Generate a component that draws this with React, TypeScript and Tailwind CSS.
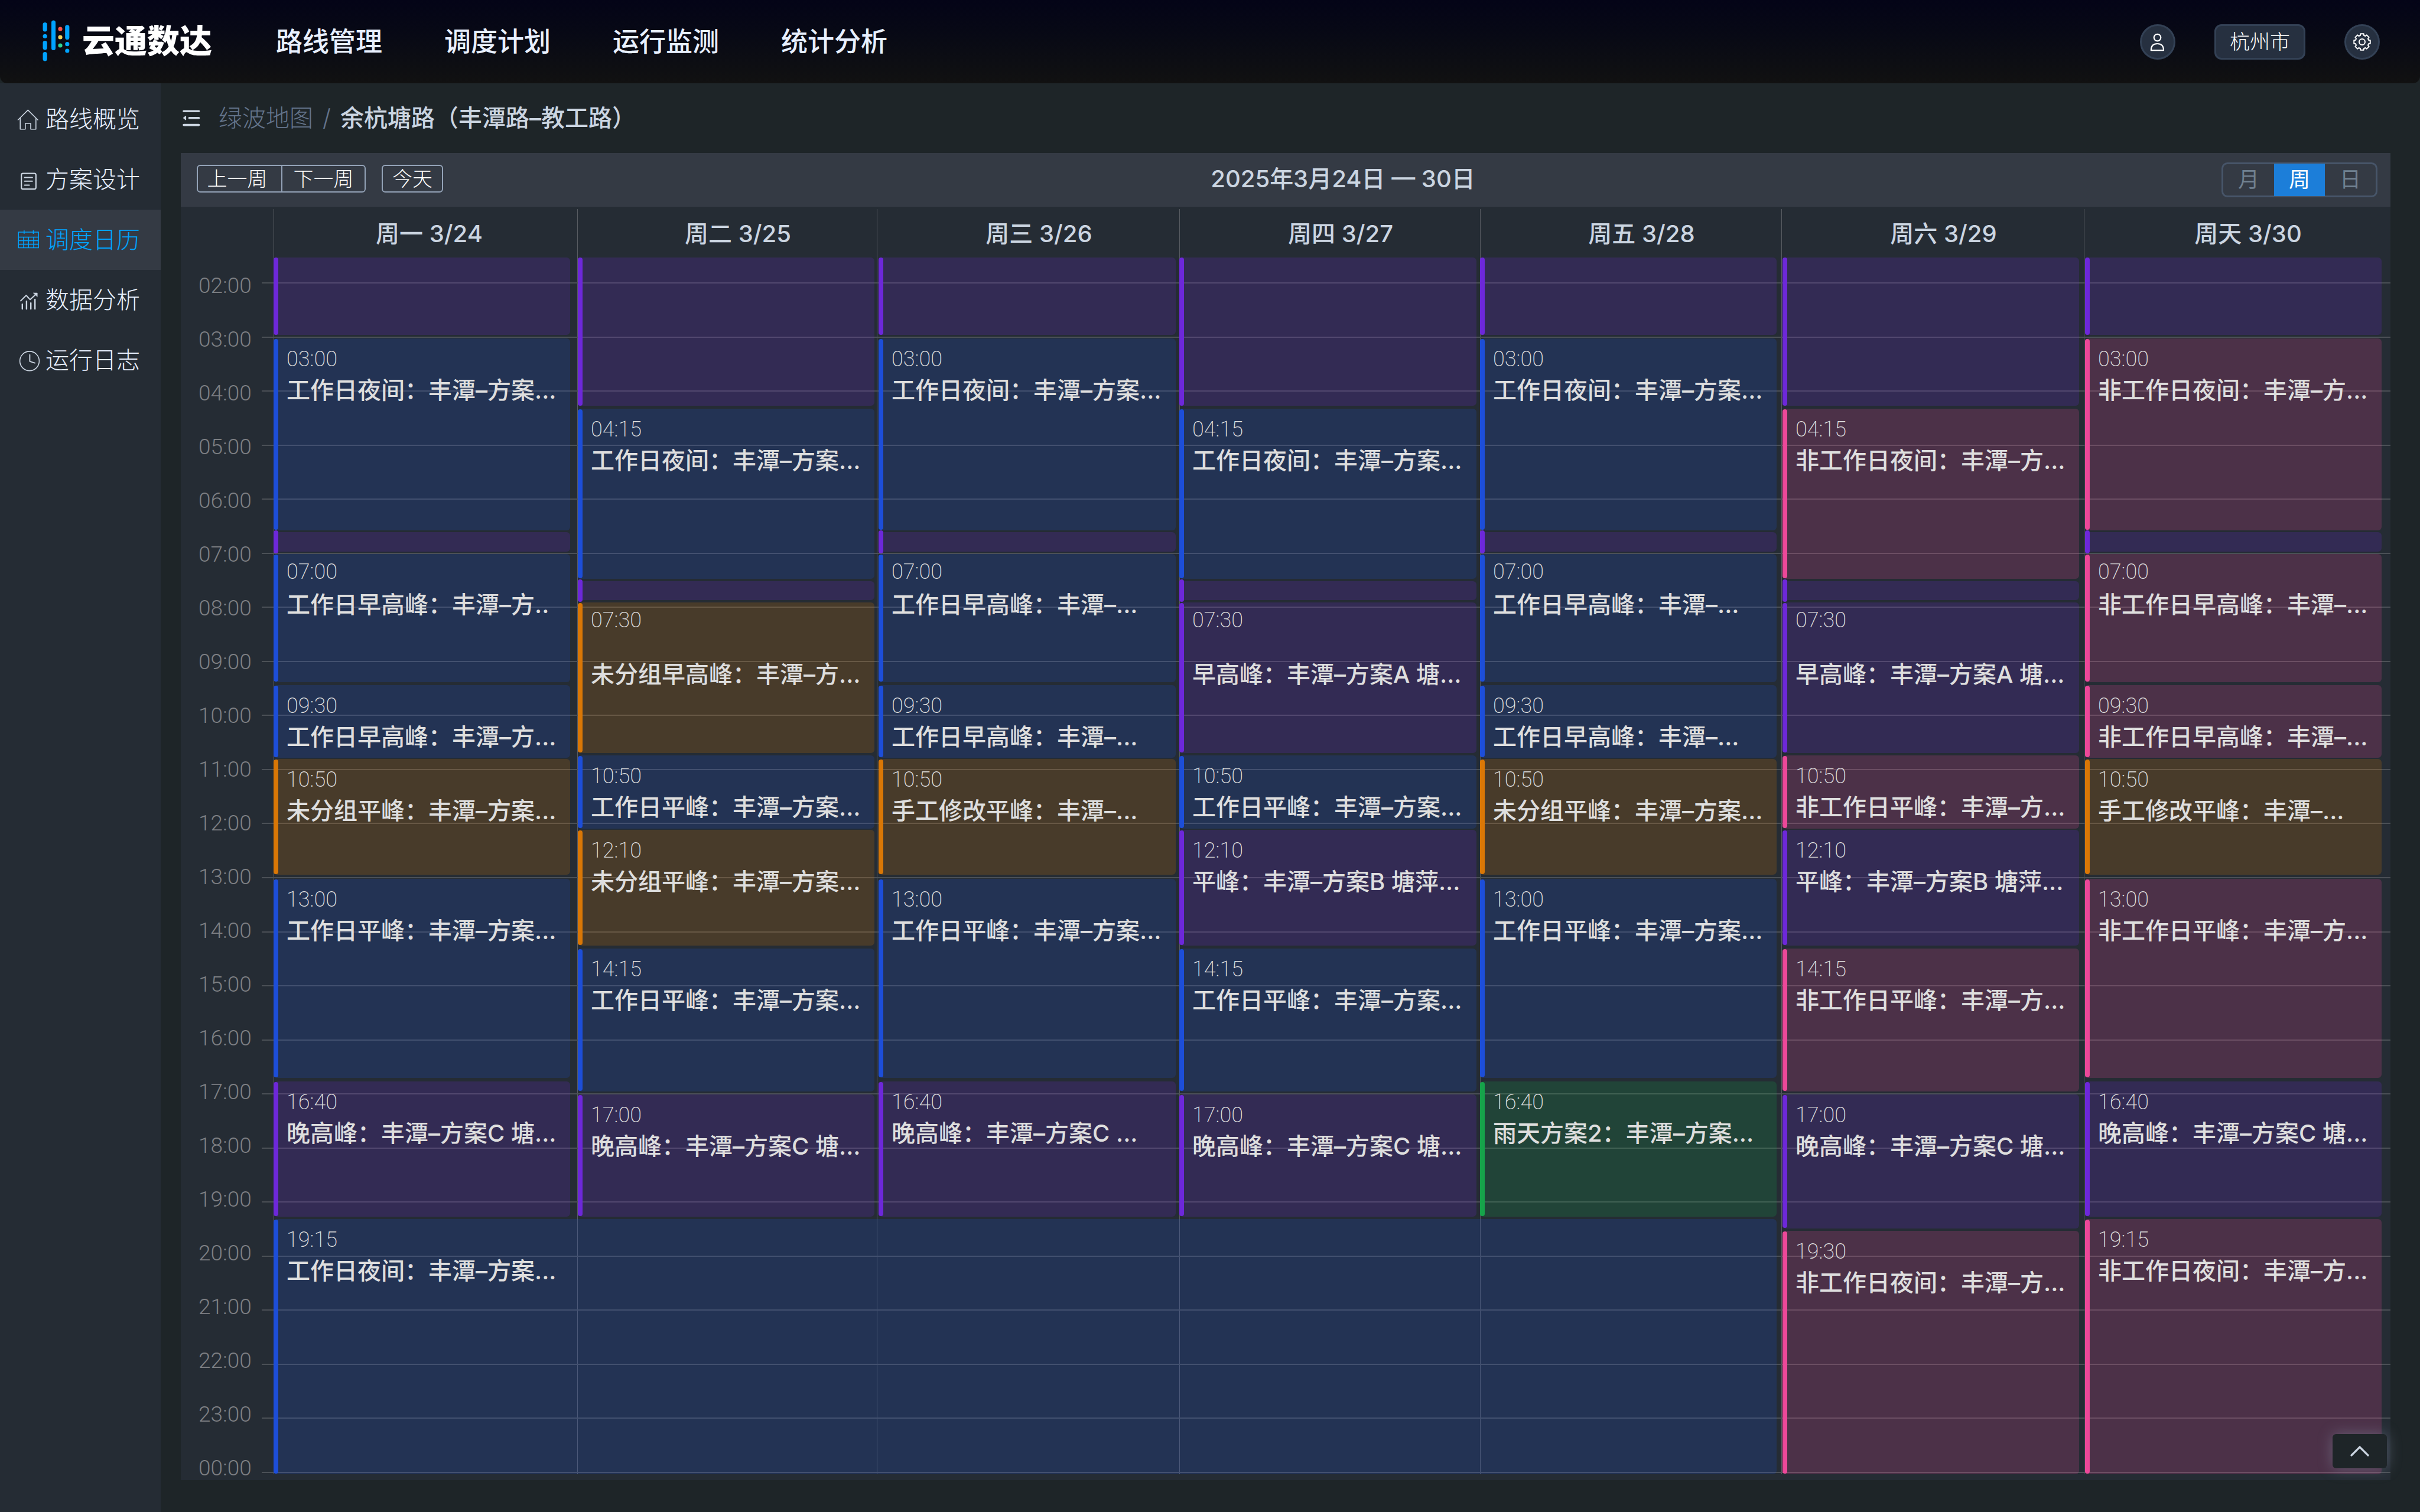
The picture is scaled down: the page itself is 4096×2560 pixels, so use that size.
import type { ReactNode } from "react";

type Tone = "violet" | "blue" | "amber" | "green" | "pink";

interface Slot {
  from: number;
  to: number;
  tone: Tone;
  time?: string;
  title?: string;
}

const BAR: Record<Tone, string> = {
  violet: "bg-[#6d28d9]",
  blue: "bg-[#1d4ed8]",
  amber: "bg-[#d97706]",
  green: "bg-[#16a34a]",
  pink: "bg-[#ec4899]",
};

const FILL: Record<Tone, string> = {
  violet: "bg-[#6d28d9]/20",
  blue: "bg-[#1d4ed8]/20",
  amber: "bg-[#d97706]/20",
  green: "bg-[#16a34a]/20",
  pink: "bg-[#ec4899]/20",
};

const COLS = "grid-cols-[514fr_507fr_512fr_509fr_510fr_512fr_519fr]";

const HOURS = Array.from({ length: 23 }, (_, i) => `${String((i + 2) % 24).padStart(2, "0")}:00`);

const WEEKDAYS = ["周一 3/24", "周二 3/25", "周三 3/26", "周四 3/27", "周五 3/28", "周六 3/29", "周天 3/30"];

/* from / to are distances down the day column */
const DAYS: { place: string; slots: Slot[] }[] = [
  {
    place: "col-start-1 pr-3",
    slots: [
      { from: 0, to: 131, tone: "violet" },
      { from: 137, to: 462, tone: "blue", time: "03:00", title: "工作日夜间：丰潭–方案..." },
      { from: 465, to: 498, tone: "violet" },
      { from: 502, to: 719, tone: "blue", time: "07:00", title: "工作日早高峰：丰潭–方.." },
      { from: 724, to: 847, tone: "blue", time: "09:30", title: "工作日早高峰：丰潭–方..." },
      { from: 849, to: 1045, tone: "amber", time: "10:50", title: "未分组平峰：丰潭–方案..." },
      { from: 1052, to: 1389, tone: "blue", time: "13:00", title: "工作日平峰：丰潭–方案..." },
      { from: 1395, to: 1624, tone: "violet", time: "16:40", title: "晚高峰：丰潭–方案C 塘..." },
    ],
  },
  {
    place: "col-start-2 pl-px pr-1",
    slots: [
      { from: 0, to: 251, tone: "violet" },
      { from: 256, to: 544, tone: "blue", time: "04:15", title: "工作日夜间：丰潭–方案..." },
      { from: 548, to: 580, tone: "violet" },
      { from: 584, to: 839, tone: "amber", time: "07:30", title: "未分组早高峰：丰潭–方..." },
      { from: 843, to: 967, tone: "blue", time: "10:50", title: "工作日平峰：丰潭–方案..." },
      { from: 969, to: 1165, tone: "amber", time: "12:10", title: "未分组平峰：丰潭–方案..." },
      { from: 1170, to: 1412, tone: "blue", time: "14:15", title: "工作日平峰：丰潭–方案..." },
      { from: 1417, to: 1624, tone: "violet", time: "17:00", title: "晚高峰：丰潭–方案C 塘..." },
    ],
  },
  {
    place: "col-start-3 pl-[3px] pr-1.5",
    slots: [
      { from: 0, to: 131, tone: "violet" },
      { from: 137, to: 462, tone: "blue", time: "03:00", title: "工作日夜间：丰潭–方案..." },
      { from: 465, to: 498, tone: "violet" },
      { from: 502, to: 719, tone: "blue", time: "07:00", title: "工作日早高峰：丰潭–..." },
      { from: 724, to: 847, tone: "blue", time: "09:30", title: "工作日早高峰：丰潭–..." },
      { from: 849, to: 1045, tone: "amber", time: "10:50", title: "手工修改平峰：丰潭–..." },
      { from: 1052, to: 1389, tone: "blue", time: "13:00", title: "工作日平峰：丰潭–方案..." },
      { from: 1395, to: 1624, tone: "violet", time: "16:40", title: "晚高峰：丰潭–方案C ..." },
    ],
  },
  {
    place: "col-start-4 pr-1.5",
    slots: [
      { from: 0, to: 251, tone: "violet" },
      { from: 256, to: 544, tone: "blue", time: "04:15", title: "工作日夜间：丰潭–方案..." },
      { from: 548, to: 580, tone: "violet" },
      { from: 584, to: 839, tone: "violet", time: "07:30", title: "早高峰：丰潭–方案A 塘..." },
      { from: 843, to: 967, tone: "blue", time: "10:50", title: "工作日平峰：丰潭–方案..." },
      { from: 969, to: 1165, tone: "violet", time: "12:10", title: "平峰：丰潭–方案B 塘萍..." },
      { from: 1170, to: 1412, tone: "blue", time: "14:15", title: "工作日平峰：丰潭–方案..." },
      { from: 1417, to: 1624, tone: "violet", time: "17:00", title: "晚高峰：丰潭–方案C 塘..." },
    ],
  },
  {
    place: "col-start-5 pr-2",
    slots: [
      { from: 0, to: 131, tone: "violet" },
      { from: 137, to: 462, tone: "blue", time: "03:00", title: "工作日夜间：丰潭–方案..." },
      { from: 465, to: 498, tone: "violet" },
      { from: 502, to: 719, tone: "blue", time: "07:00", title: "工作日早高峰：丰潭–..." },
      { from: 724, to: 847, tone: "blue", time: "09:30", title: "工作日早高峰：丰潭–..." },
      { from: 849, to: 1045, tone: "amber", time: "10:50", title: "未分组平峰：丰潭–方案..." },
      { from: 1052, to: 1389, tone: "blue", time: "13:00", title: "工作日平峰：丰潭–方案..." },
      { from: 1395, to: 1624, tone: "green", time: "16:40", title: "雨天方案2：丰潭–方案..." },
    ],
  },
  {
    place: "col-start-6 pl-0.5 pr-2",
    slots: [
      { from: 0, to: 251, tone: "violet" },
      { from: 256, to: 544, tone: "pink", time: "04:15", title: "非工作日夜间：丰潭–方..." },
      { from: 548, to: 580, tone: "violet" },
      { from: 584, to: 839, tone: "violet", time: "07:30", title: "早高峰：丰潭–方案A 塘..." },
      { from: 843, to: 967, tone: "pink", time: "10:50", title: "非工作日平峰：丰潭–方..." },
      { from: 969, to: 1165, tone: "violet", time: "12:10", title: "平峰：丰潭–方案B 塘萍..." },
      { from: 1170, to: 1412, tone: "pink", time: "14:15", title: "非工作日平峰：丰潭–方..." },
      { from: 1417, to: 1644, tone: "violet", time: "17:00", title: "晚高峰：丰潭–方案C 塘..." },
      { from: 1648, to: 2060, tone: "pink", time: "19:30", title: "非工作日夜间：丰潭–方..." },
    ],
  },
  {
    place: "col-start-7 pl-0.5 pr-[15px]",
    slots: [
      { from: 0, to: 131, tone: "violet" },
      { from: 137, to: 462, tone: "pink", time: "03:00", title: "非工作日夜间：丰潭–方..." },
      { from: 465, to: 498, tone: "violet" },
      { from: 502, to: 719, tone: "pink", time: "07:00", title: "非工作日早高峰：丰潭–..." },
      { from: 724, to: 847, tone: "pink", time: "09:30", title: "非工作日早高峰：丰潭–..." },
      { from: 849, to: 1045, tone: "amber", time: "10:50", title: "手工修改平峰：丰潭–..." },
      { from: 1052, to: 1389, tone: "pink", time: "13:00", title: "非工作日平峰：丰潭–方..." },
      { from: 1395, to: 1624, tone: "violet", time: "16:40", title: "晚高峰：丰潭–方案C 塘..." },
      { from: 1628, to: 2060, tone: "pink", time: "19:15", title: "非工作日夜间：丰潭–方..." },
    ],
  },
];

function EventCard({ slot, gap }: { slot: Slot; gap: number }) {
  const early = slot.time === "07:00" || slot.time === "07:30";
  const titleGap = slot.time === "07:30" ? "mt-12" : early ? "mt-3" : "mt-[9px]";
  return (
    <article
      className={`flex shrink-0 rounded-md ${FILL[slot.tone]}`}
      style={{ height: slot.to - slot.from, marginTop: gap }}
    >
      <span className={`w-2 shrink-0 rounded-full ${BAR[slot.tone]} ${slot.time ? "my-px" : slot.from ? "-my-[3px]" : "my-0"}`} />
      {slot.time && (
        <div className={`min-w-0 pl-3.5 text-[#dedede] ${early ? "pt-3" : "pt-[17px]"}`}>
          <time className="block font-['Roboto','Noto_Sans_CJK_SC',sans-serif] text-[36px] leading-9 font-extralight">{slot.time}</time>
          <h3 className={`text-[40px] leading-[52px] font-medium whitespace-nowrap ${titleGap}`}>{slot.title}</h3>
        </div>
      )}
    </article>
  );
}

function Icon({ children }: { children: ReactNode }) {
  return (
    <svg
      viewBox="0 0 36 36"
      className="size-9 shrink-0 overflow-visible"
      fill="none"
      stroke="currentColor"
      strokeLinecap="round"
      strokeLinejoin="round"
      aria-hidden="true"
    >
      {children}
    </svg>
  );
}

const MENU: { label: string; icon: ReactNode; active?: boolean }[] = [
  {
    label: "路线概览",
    icon: (
      <Icon>
        <path strokeWidth="1.6" d="M1.5 19 18.3 2.4 35 19M5.2 16.2V34.8h8.6V25h9.2v9.8h8.8V16.2" />
      </Icon>
    ),
  },
  {
    label: "方案设计",
    icon: (
      <Icon>
        <rect x="7.2" y="7.6" width="24.6" height="26.6" rx="2.6" strokeWidth="2.2" />
        <path strokeWidth="2" d="M12.6 14.4h13.2M12.6 20.8h13.2M12.6 27.4h8" />
      </Icon>
    ),
  },
  {
    label: "调度日历",
    active: true,
    icon: (
      <Icon>
        <path
          strokeWidth="1.5"
          strokeLinecap="butt"
          strokeLinejoin="miter"
          d="M2.2 5h34v26.4h-34zM2.2 13.4h34M2.2 19.4h34M2.2 25.4h34M11 13.4v18M19.3 13.4v18M28 13.4v18M11.8 2v6M27.4 2v6"
        />
      </Icon>
    ),
  },
  {
    label: "数据分析",
    icon: (
      <Icon>
        <path strokeWidth="2" d="M6 19.4 15.4 10l6.6 7.3L32 8" />
        <path fill="currentColor" strokeWidth="0.6" d="M27.6 6h6.6v6.2z" />
        <path strokeWidth="2.4" d="M8.8 25v8M15.9 20v13M23.2 23v10M30.2 17v16" />
      </Icon>
    ),
  },
  {
    label: "运行日志",
    icon: (
      <Icon>
        <circle cx="21" cy="19.3" r="16.4" strokeWidth="1.6" />
        <path strokeWidth="1.9" d="M21.4 8.6v11.2l8.6 2.8" />
      </Icon>
    ),
  },
];

const GEAR = (() => {
  const pts: string[] = [];
  for (let k = 0; k < 8; k++) {
    for (const [deg, r] of [
      [-16, 11.4],
      [-11, 14],
      [11, 14],
      [16, 11.4],
    ]) {
      const a = ((k * 45 + deg - 90) * Math.PI) / 180;
      pts.push(`${(30 + r * Math.cos(a)).toFixed(2)} ${(30 + r * Math.sin(a)).toFixed(2)}`);
    }
  }
  return `M${pts.join("L")}Z`;
})();

function TopBar() {
  return (
    <header className="flex h-[141px] items-center rounded-b-xl bg-linear-to-b from-[#040417] to-[#111111] pr-[68px] pl-[72px]">
      <a href="#home" className="flex items-center gap-[21px] pb-1 text-white">
        <svg viewBox="0 0 46 70" className="h-[70px] w-[46px]" fill="#00a3ff" aria-hidden="true">
          <rect x="0.5" y="4" width="7.2" height="15.4" rx="3.6" />
          <circle cx="4.1" cy="27.3" r="3.6" />
          <rect x="0.5" y="35" width="7.2" height="15.4" rx="3.6" />
          <rect x="0.5" y="54" width="7.2" height="15.4" rx="3.6" />
          <rect x="15" y="0.5" width="7" height="50.4" rx="3.5" />
          <circle cx="30" cy="15" r="3.6" fill="#ff5449" />
          <circle cx="30" cy="29" r="3.6" fill="#f5d35c" />
          <circle cx="30" cy="43" r="3.6" fill="#2fd695" />
          <rect x="38.2" y="8.2" width="7.2" height="24.8" rx="3.6" />
          <circle cx="41.8" cy="40.7" r="3.6" />
          <circle cx="41.8" cy="52" r="3.6" />
        </svg>
        <span className="text-[55px] leading-[60px] font-black">云通数达</span>
      </a>
      <nav className="ml-[108px] flex gap-[105px] text-[45px] leading-[60px] font-medium text-[#e8f0ff]">
        <a href="#routes">路线管理</a>
        <a href="#plans">调度计划</a>
        <a href="#monitor">运行监测</a>
        <a href="#stats">统计分析</a>
      </nav>
      <div className="ml-auto flex items-center gap-[66px] text-white">
        <button type="button" aria-label="用户" className="size-[60px] rounded-full border-[3px] border-[#334155] bg-[#263040]">
          <svg viewBox="3 3 54 54" className="size-[54px]" fill="none" stroke="currentColor" strokeWidth="2.2" strokeLinejoin="round">
            <circle cx="29.5" cy="22.6" r="5.8" />
            <path d="M18.8 44.2c0-7.6 4.2-11.2 10.6-11.2s10.6 3.6 10.6 11.2z" />
          </svg>
        </button>
        <button
          type="button"
          className="h-[60px] w-[154px] rounded-xl border-[3px] border-[#334155] bg-[#263040] text-[34px] leading-[54px] font-light"
        >
          杭州市
        </button>
        <button type="button" aria-label="设置" className="size-[60px] rounded-full border-[3px] border-[#334155] bg-[#263040]">
          <svg viewBox="3 3 54 54" className="size-[54px]" fill="none" stroke="currentColor" strokeWidth="2" strokeLinejoin="round">
            <path d={GEAR} />
            <circle cx="30" cy="30" r="5" />
          </svg>
        </button>
      </div>
    </header>
  );
}

function Sidebar() {
  return (
    <aside className="w-[272px] shrink-0 bg-[#252c34] pt-2.5">
      <nav>
        {MENU.map((item) => (
          <a
            key={item.label}
            href={`#${item.label}`}
            aria-current={item.active ? "page" : undefined}
            className={`flex h-[102px] items-center gap-3 pl-[29px] ${
              item.active ? "bg-[#343a44] text-[#00a3ff]" : "text-[#cbd5e1]"
            }`}
          >
            {item.icon}
            <span className={`text-[40px] leading-[52px] font-light ${item.active ? "" : "text-[#e8f0ff]"}`}>{item.label}</span>
          </a>
        ))}
      </nav>
    </aside>
  );
}

function Breadcrumb() {
  return (
    <div className="flex h-[118px] items-center pl-[3px] text-[40px] leading-[52px] text-[#cbd5e1]">
      <button type="button" aria-label="收起菜单" className="mr-[31px]">
        <svg viewBox="0 0 30 30" className="size-[30px]" fill="none" stroke="currentColor" strokeWidth="3.6" strokeLinecap="round">
          <path d="M2 3.2h25.6M11.4 14.8h16.2M2 26.6h25.6" />
          <path d="M1.6 14.8 5.4 11.8v6z" fill="currentColor" strokeWidth="1.4" strokeLinejoin="round" />
        </svg>
      </button>
      <a href="#map" className="font-light text-[#64748b]">
        绿波地图
      </a>
      <span className="mx-4 font-light text-[#64748b]">/</span>
      <span className="font-medium">余杭塘路（丰潭路–教工路）</span>
    </div>
  );
}

function Toolbar() {
  return (
    <div className="flex h-[91px] items-center justify-between bg-[#343a44] pr-[22px] pl-[27px]">
      <div className="flex gap-[27px] pb-1 text-[34px] leading-[43px] font-light text-white">
        <div className="flex rounded-md border-2 border-[#94a3b8]">
          <button type="button" className="w-[141px] pr-2">
            上一周
          </button>
          <button type="button" className="w-[141px] border-l-2 border-[#94a3b8]">
            下一周
          </button>
        </div>
        <button type="button" className="w-[104px] rounded-md border-2 border-[#94a3b8]">
          今天
        </button>
      </div>
      <h1 className="pb-1 pl-9 text-[40px] leading-[52px] font-medium text-[#cbd5e1]">2025年3月24日 — 30日</h1>
      <div className="flex h-[59px] w-[264px] rounded-[10px] border-[3px] border-[#475569] text-[36px] leading-[53px] text-[#708090]">
        <button type="button" className="flex-1">
          月
        </button>
        <button type="button" aria-pressed="true" className="-my-px flex-1 bg-[#1c7ed9] text-white">
          周
        </button>
        <button type="button" className="flex-1">
          日
        </button>
      </div>
    </div>
  );
}

function WeekGrid() {
  return (
    <section className="bg-[#252c34] pt-1">
      <div className={`ml-[157px] grid h-[82px] ${COLS}`}>
        {WEEKDAYS.map((day) => (
          <h2
            key={day}
            className="border-l border-[#575b61] pt-4 pl-9 text-center text-[40px] leading-[52px] font-medium text-[#cbd5e1] first:pl-3"
          >
            {day}
          </h2>
        ))}
      </div>
      <div className="flex">
        <div className="w-[157px] shrink-0 pt-[30px] pl-[30px] font-['Roboto','Noto_Sans_CJK_SC',sans-serif] text-[37px] leading-9 font-light text-[#7d7f83]">
          {HOURS.map((hour) => (
            <div key={hour} className="h-[91px] last:h-9">
              {hour}
            </div>
          ))}
        </div>
        <div className="relative flex-1">
          <div className={`pointer-events-none absolute inset-x-0 top-0 bottom-2.5 grid ${COLS}`}>
            {WEEKDAYS.map((day) => (
              <div key={day} className="border-l border-[#575b61]" />
            ))}
          </div>
          <div className="pointer-events-none absolute right-0 bottom-3 -left-5 top-[42px] flex flex-col border-t-2 border-[#4b5056]">
            {HOURS.slice(1).map((hour) => (
              <div key={hour} className="flex-1 border-b-2 border-[#4b5056]" />
            ))}
          </div>
          <div className={`relative grid pb-2.5 ${COLS}`}>
            {DAYS.map((day, i) => (
              <div key={WEEKDAYS[i]} className={`row-start-1 flex min-w-0 flex-col ${day.place}`}>
                {day.slots.map((slot, j) => (
                  <EventCard key={slot.from} slot={slot} gap={j ? slot.from - day.slots[j - 1].to : 0} />
                ))}
              </div>
            ))}
            <div className="col-start-1 col-end-6 row-start-1 flex flex-col self-end pr-2">
              <EventCard
                gap={0}
                slot={{ from: 1628, to: 2060, tone: "blue", time: "19:15", title: "工作日夜间：丰潭–方案..." }}
              />
            </div>
          </div>
        </div>
      </div>
    </section>
  );
}

export default function App() {
  return (
    <div className="flex min-h-screen flex-col bg-[#1e2528] font-['Inter','Noto_Sans_CJK_SC',sans-serif]" lang="zh-CN">
      <TopBar />
      <div className="flex flex-1">
        <Sidebar />
        <main className="min-w-0 flex-1 pr-[50px] pl-[34px]">
          <Breadcrumb />
          <Toolbar />
          <WeekGrid />
        </main>
      </div>
      <button
        type="button"
        aria-label="返回顶部"
        className="fixed right-14 bottom-[74px] flex h-[58px] w-[92px] items-center justify-center rounded-md bg-[#1e2528] text-[#cbd5e1] shadow-[0_0_24px_rgba(148,163,184,0.4)]"
      >
        <svg viewBox="0 0 32 20" className="h-5 w-8" fill="none" stroke="currentColor" strokeWidth="3.2" strokeLinecap="round">
          <path d="M2 17 16 3l14 14" />
        </svg>
      </button>
    </div>
  );
}
